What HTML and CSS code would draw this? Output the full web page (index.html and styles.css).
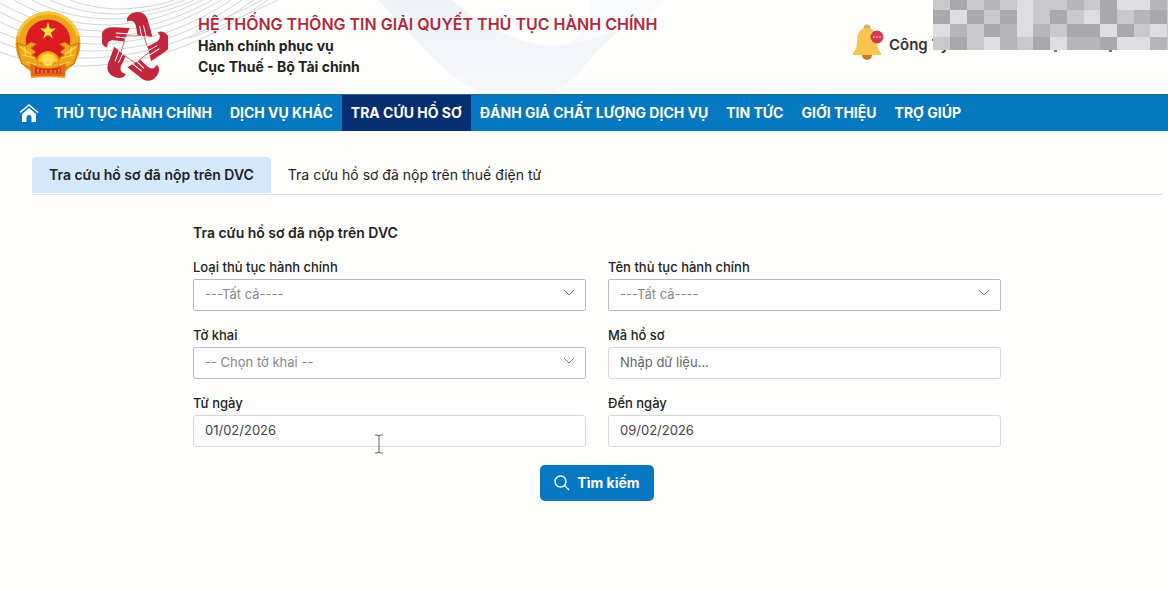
FILE: index.html
```html
<!DOCTYPE html>
<html lang="vi">
<head>
    <meta charset="UTF-8">
    <meta name="viewport" content="width=device-width, initial-scale=1.0">
    <title>Tra cứu hồ sơ</title>

    <link rel="stylesheet" href="styles.css">
</head>
<body>

    <header class="header">
        <svg class="header-bg" width="700" height="94" viewBox="0 0 700 94" aria-hidden="true">
            <defs>
                <linearGradient id="ribbon" x1="0" y1="0" x2="0" y2="1">
                    <stop offset="0" stop-color="#eff2f8"/>
                    <stop offset="1" stop-color="#f5f7fb"/>
                </linearGradient>
            </defs>
            <path d="M378 0H452C476 22 520 46 552 46C592 46 622 14 668 0C630 20 604 42 588 62C574 80 562 90 546 91H482C446 80 424 46 378 0Z" fill="url(#ribbon)"/>
            <path d="M590 0H668C640 20 606 38 566 45C584 34 594 18 590 0Z" fill="#f8fafc"/>
            <g fill="none" stroke="#c3cbd1" stroke-width="0.8">
                <path d="M0 52C26 62 56 67 88 66C160 62 210 40 268 0"/>
                <path d="M0 42C30 54 60 59 90 58C156 56 206 34 254 0"/>
                <path d="M0 32C30 46 64 51 94 51C152 50 200 29 242 0"/>
                <path d="M0 22C32 38 66 44 98 44C150 43 194 25 231 0"/>
                <path d="M0 12C34 31 70 37 102 37C146 36 186 21 221 0"/>
                <path d="M0 3C36 24 74 31 106 31C144 30 180 18 212 0"/>
                <path d="M14 0C44 18 78 25 110 25C142 24 174 14 203 0"/>
                <path d="M32 0C58 14 86 19 114 19C140 18 170 11 194 0"/>
                <path d="M50 0C72 10 94 14 118 14C140 13 166 8 185 0"/>
                <path d="M70 0C86 6 104 9 122 9C142 8 160 5 175 0"/>
                <path d="M190 38C222 26 248 14 278 0"/>
                <path d="M200 27C222 20 244 10 262 0"/>
            </g>
        </svg>

        <div class="brand">
            <svg class="emblem" width="68" height="70" viewBox="0 0 68 70" role="img" aria-label="Quốc huy">
                <circle cx="34" cy="33" r="32.5" fill="#eda51d"/>
                <path d="M4 25A31 31 0 0 1 64 25" fill="none" stroke="#f7c83c" stroke-width="3"/>
                <ellipse cx="34" cy="29" rx="22" ry="20.5" fill="#dc1c20"/>
                <path d="M12 25C10 43 21 51 34 53C47 51 58 43 56 25L48 47H20Z" fill="#dc1c20"/>
                <path d="M34 11L36 17.500H42L37 21.500L39 27.500L34 24L29 27.500L31 21.500L26 17.500H32Z" fill="#ffdf3e"/>
                <g fill="#f0a51b" stroke="#c5540e" stroke-width="0.8">
                    <path d="M3 32L11 35L17 31L23 33L17 37L22 41L18 44L25 50L20 59L8 53L5 44Z"/>
                    <path d="M65 32L57 35L51 31L45 33L51 37L46 41L50 44L43 50L48 59L60 53L63 44Z"/>
                </g>
                <g fill="none" stroke="#ffdc50" stroke-width="1.2">
                    <path d="M6 36L17 43M8 44L21 47M12 51L23 54M10 35L12 45M62 36L51 43M60 44L47 47M56 51L45 54M58 35L56 45"/>
                </g>
                <path d="M23 52A11 11 0 0 1 45 52Z" fill="#ffc927" stroke="#f39b16" stroke-width="2"/>
                <circle cx="34" cy="49" r="6" fill="#ffdc4b"/>
                <path d="M16 52Q34 62 52 52L51 67Q34 64 17 67Z" fill="#e36b12"/>
                <path d="M21 56Q34 60 47 56V63Q34 61 21 63Z" fill="#d72d1c"/>
                <path d="M24 58V62M28 59V62M32 59V62M37 59V62M41 59V62M45 58V62" stroke="#f6b52c"/>
                <path d="M17 66H51" stroke="#f8c549"/>
            </svg>

            <svg class="star-logo" width="66" height="70" viewBox="-100 -112 200 212" role="img" aria-label="Dịch vụ công">
                <defs>
                    <g id="hand">
                        <path d="M-24 -80C-28 -97 -8 -110 12 -109C30 -107 38 -92 41 -76L53 -34L8 -38L2 -70C-2 -82 -12 -86 -24 -80Z" fill="#c4273c"/>
                        <path d="M20 -36L14 -66M34 -35L25 -69" fill="none" stroke="#fff" stroke-width="3"/>
                        <path d="M-52 -36L12 -37" fill="none" stroke="#c4273c" stroke-width="2"/>
                    </g>
                </defs>
                <use href="#hand"/>
                <use href="#hand" transform="rotate(72)"/>
                <use href="#hand" transform="rotate(144)"/>
                <use href="#hand" transform="rotate(216)"/>
                <use href="#hand" transform="rotate(288)"/>
            </svg>

            <div class="brand-text">
                <h1 class="brand-title">HỆ THỐNG THÔNG TIN GIẢI QUYẾT THỦ TỤC HÀNH CHÍNH</h1>
                <p>Hành chính phục vụ</p>
                <p>Cục Thuế - Bộ Tài chính</p>
            </div>
        </div>

        <div class="account">
            <svg width="32" height="38" viewBox="0 0 32 38" role="img" aria-label="Thông báo">
                <circle cx="15" cy="4" r="3.500" fill="#d9b16c"/>
                <path d="M10 31A5 5 0 0 0 20 31Z" fill="#c77a1a"/>
                <path d="M15 4C8 4 5 10 5 16C5 23 4 26 1 29V31H29V29C26 26 25 23 25 16C25 10 22 4 15 4Z" fill="#fbc54d"/>
                <circle cx="25" cy="13" r="6.500" fill="#d43a50"/>
                <path d="M21 13H29" stroke="#f0a3ac" stroke-width="1.500" stroke-dasharray="2 1"/>
            </svg>
            <span class="account-name">Công Ty</span>
        </div>

        <svg class="mosaic" width="235" height="53" viewBox="0 0 235 53" shape-rendering="crispEdges" aria-hidden="true">
            <path d="M0 0H235V50H0Z" fill="#c9c9cb"/>
            <path d="M17 0h17v10h-17zM167 0h17v10h-17zM0 10h17v14h-17zM34 10h17v14h-17zM67 10h17v14h-17zM117 10h17v14h-17zM167 10h17v14h-17zM217 10h17v14h-17zM51 24h16v13h-16zM134 24h33v13h-33zM184 24h17v13h-17zM17 37h17v13h-17zM100 37h17v13h-17zM167 37h17v13h-17z" fill="#a9a9ac"/>
            <path d="M51 0h16v10h-16zM134 0h17v10h-17zM217 0h17v10h-17zM201 10h16v14h-16zM17 24h17v13h-17zM67 24h17v13h-17zM100 24h17v13h-17zM67 37h17v13h-17zM134 37h33v13h-33zM217 37h17v13h-17z" fill="#b6b6b9"/>
            <path d="M84 0h16v10h-16zM184 0h33v10h-33zM17 10h17v14h-17zM84 10h16v27h-16zM151 10h16v14h-16zM0 24h17v13h-17zM167 24h17v13h-17zM217 24h17v13h-17zM51 37h16v13h-16zM117 37h17v13h-17zM184 37h33v13h-33z" fill="#dedee2"/>
            <path d="M121 50h3v2h-3zM176 50h3v2h-3z" fill="#777"/>
        </svg>
    </header>

    <nav class="nav">
        <a class="nav-link nav-home" href="#" aria-label="Trang chủ">
            <svg width="20" height="20" viewBox="0 0 20 20" fill="none" aria-hidden="true">
                <path d="M1 9.500L10 2L19 9.500" stroke="#fff" stroke-width="1.500"/>
                <path d="M3 11L10 5L17 11V19H12.500V14.500A2.500 2.500 0 0 0 7.500 14.500V19H3Z" fill="#fff"/>
            </svg>
        </a>
        <a class="nav-link" href="#">THỦ TỤC HÀNH CHÍNH</a>
        <a class="nav-link" href="#">DỊCH VỤ KHÁC</a>
        <a class="nav-link nav-active" href="#">TRA CỨU HỒ SƠ</a>
        <a class="nav-link" href="#">ĐÁNH GIÁ CHẤT LƯỢNG DỊCH VỤ</a>
        <a class="nav-link" href="#">TIN TỨC</a>
        <a class="nav-link" href="#">GIỚI THIỆU</a>
        <a class="nav-link" href="#">TRỢ GIÚP</a>
    </nav>

    <main class="content">
        <div class="tabs">
            <a class="tab tab-active" href="#">Tra cứu hồ sơ đã nộp trên DVC</a>
            <a class="tab" href="#">Tra cứu hồ sơ đã nộp trên thuế điện tử</a>
        </div>

        <form class="search">
            <h2 class="search-title">Tra cứu hồ sơ đã nộp trên DVC</h2>
            <div class="fields">
                <div class="field">
                    <label for="loai">Loại thủ tục hành chính</label>
                    <div class="select">
                        <select id="loai"><option>---Tất cả----</option></select>
                        <svg class="arrow" width="12" height="8" viewBox="0 0 12 8" aria-hidden="true"><path d="M1 1L6 6L11 1"/></svg>
                    </div>
                </div>
                <div class="field">
                    <label for="ten">Tên thủ tục hành chính</label>
                    <div class="select">
                        <select id="ten"><option>---Tất cả----</option></select>
                        <svg class="arrow" width="12" height="8" viewBox="0 0 12 8" aria-hidden="true"><path d="M1 1L6 6L11 1"/></svg>
                    </div>
                </div>
                <div class="field">
                    <label for="tokhai">Tờ khai</label>
                    <div class="select">
                        <select id="tokhai"><option>-- Chọn tờ khai --</option></select>
                        <svg class="arrow" width="12" height="8" viewBox="0 0 12 8" aria-hidden="true"><path d="M1 1L6 6L11 1"/></svg>
                    </div>
                </div>
                <div class="field">
                    <label for="ma">Mã hồ sơ</label>
                    <input type="text" id="ma" placeholder="Nhập dữ liệu...">
                </div>
                <div class="field">
                    <label for="tu">Từ ngày</label>
                    <div class="date">
                        <input type="text" id="tu" value="01/02/2026">
                        <svg class="cursor" width="10" height="20" viewBox="0 0 10 20" aria-hidden="true"><path d="M1 1H4L5 2L6 1H9M5 2V18M1 19H4L5 18L6 19H9"/></svg>
                    </div>
                </div>
                <div class="field">
                    <label for="den">Đến ngày</label>
                    <input type="text" id="den" value="09/02/2026">
                </div>
            </div>
            <button class="btn" type="button">
                <svg width="16" height="16" viewBox="0 0 16 16" fill="none" stroke="#fff" stroke-width="1.400" aria-hidden="true">
                    <circle cx="6.500" cy="6.500" r="5.500"/>
                    <path d="M10.500 10.500L15 15"/>
                </svg>
                Tìm kiếm
            </button>
        </form>
    </main>

</body>
</html>
```

FILE: styles.css
```css
* {
    padding: 0;
    margin: 0;
    box-sizing: border-box;
}

body {
    background-color: #fefefc;
    font-family: Inter, sans-serif;
    font-size: 14px;
    line-height: 20px;
    color: #222;
}

a {
    color: inherit;
    text-decoration: none;
}

svg {
    display: block;
}

.header {
    min-height: 94px;
    padding: 0 14px;

    position: relative;
    overflow: hidden;

    display: flex;
    justify-content: space-between;
    align-items: flex-start;
}

.header-bg {
    position: absolute;
    top: 0;
    left: 0;
}

.brand {
    padding-top: 11px;

    position: relative;

    display: flex;
    align-items: flex-start;
}

.star-logo {
    margin-left: 20px;
}

.brand-text {
    padding-top: 2px;
    margin-left: 30px;

    line-height: 21px;
    font-weight: 700;
}

.brand-title {
    font-size: 16px;
    line-height: 22px;
    font-weight: 600;
    color: #b02a3c;
}

.account {
    width: 302px;
    padding-top: 24px;

    display: flex;
    gap: 5px;
}

.account-name {
    padding-top: 11px;

    font-size: 15px;
    font-weight: 600;
    color: #333;
}

.mosaic {
    position: absolute;
    top: 0;
    right: 0;
}

.nav {
    min-height: 37px;
    padding-left: 14px;

    display: flex;

    background-color: #0678c1;
    border-top: 1px solid #2b6590;

    color: white;
    font-weight: 700;
}

.nav-link {
    padding: 8px 9px;
}

.nav-home {
    padding: 8px 6px 8px 5px;
}

.nav-active {
    background-color: #052f70;
}

.content {
    padding: 26px 6px 24px 32px;
}

.tabs {
    padding-bottom: 1px;

    display: flex;

    border-bottom: 1px solid #dcdee0;
}

.tab {
    padding: 8px 17px;

    border-radius: 4px 4px 0 0;
}

.tab-active {
    background-color: #d4e8fb;
    font-weight: 600;
}

.search {
    max-width: 808px;
    margin: 28px auto 0;
}

.search-title {
    margin-bottom: 14px;

    font-size: 14px;
    font-weight: 600;
}

.fields {
    display: grid;
    grid-template-columns: 1fr 1fr;
    gap: 14px 22px;
}

.field label {
    margin-bottom: 2px;

    display: block;

    font-size: 13px;
    font-weight: 500;
}

.field input,
.field select {
    width: 100%;
    height: 32px;
    padding: 0 11px 2px;

    display: block;
    appearance: none;
    background-color: #fefefe;
    border: 1px solid #d8d9db;
    border-radius: 3px;

    font: inherit;
    font-size: 13px;
    color: #444;
}

.field select {
    border-color: #b9babd;
    border-radius: 2px;
    color: #888;
}

.field input::placeholder {
    color: #666;
    opacity: 1;
}

.select,
.date {
    position: relative;
}

.arrow {
    position: absolute;
    top: 10px;
    right: 11px;

    fill: none;
    stroke: #777;
    pointer-events: none;
}

.cursor {
    position: absolute;
    top: 19px;
    left: 181px;

    fill: none;
    stroke: #666;
    pointer-events: none;
}

.btn {
    height: 36px;
    padding: 0 14px;
    margin: 18px auto 0;

    display: flex;
    align-items: center;
    gap: 7px;

    background-color: #0678c1;
    border: 0;
    border-radius: 5px;

    font: inherit;
    font-weight: 700;
    color: white;
    cursor: pointer;
}
```
